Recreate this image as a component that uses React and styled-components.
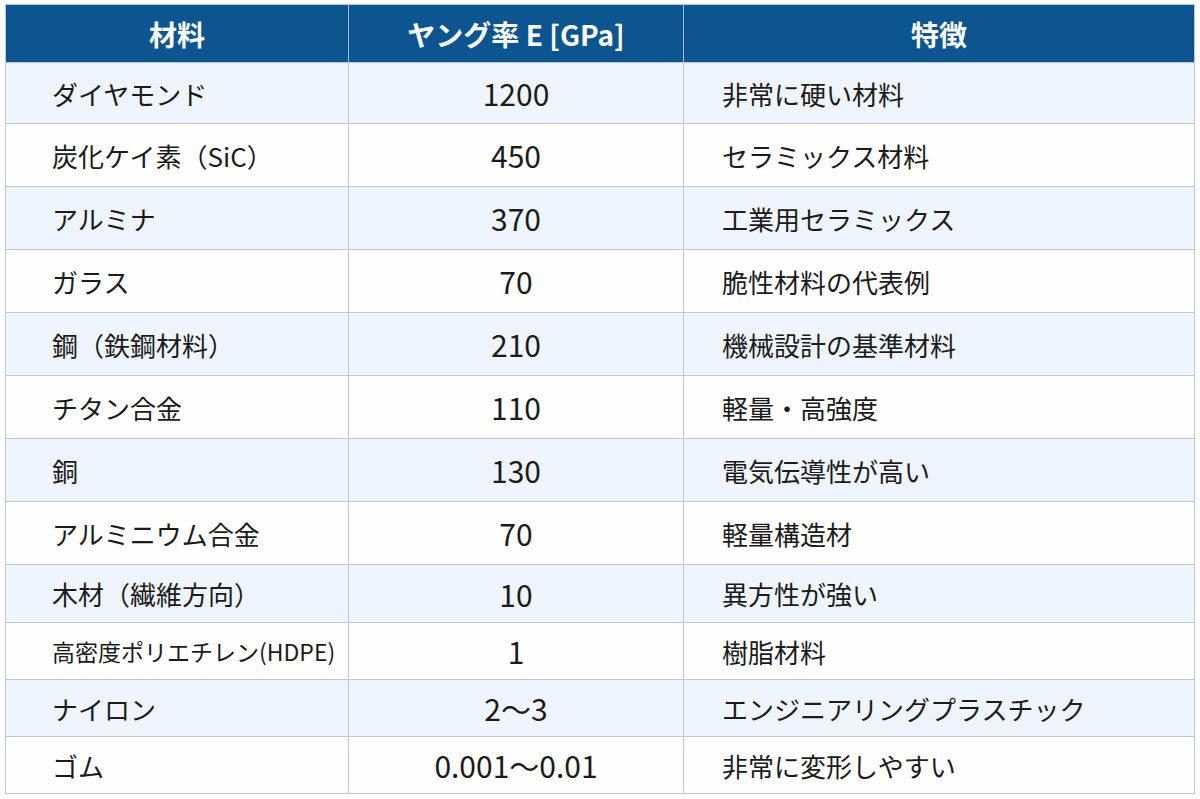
import React from 'react';
import styled, {createGlobalStyle} from 'styled-components';

const GlobalStyle = createGlobalStyle`
  html, body {
    margin: 0;
    padding: 0;
    background: #ffffff;
  }
  body {
    font-family: 'Noto Sans CJK JP', 'Noto Sans', sans-serif;
    color: #1b1b1b;
  }
`;

//table data
const rows = [
  {name: 'ダイヤモンド', value: '1200', note: '非常に硬い材料', h: 61},
  {name: '炭化ケイ素（SiC）', value: '450', note: 'セラミックス材料', h: 63},
  {name: 'アルミナ', value: '370', note: '工業用セラミックス', h: 63},
  {name: 'ガラス', value: '70', note: '脆性材料の代表例', h: 63},
  {name: '鋼（鉄鋼材料）', value: '210', note: '機械設計の基準材料', h: 63},
  {name: 'チタン合金', value: '110', note: '軽量・高強度', h: 63},
  {name: '銅', value: '130', note: '電気伝導性が高い', h: 63},
  {name: 'アルミニウム合金', value: '70', note: '軽量構造材', h: 63},
  {name: '木材（繊維方向）', value: '10', note: '異方性が強い', h: 58},
  {name: '高密度ポリエチレン(HDPE)', value: '1', note: '樹脂材料', h: 57, small: true},
  {name: 'ナイロン', value: '2〜3', note: 'エンジニアリングプラスチック', h: 57},
  {name: 'ゴム', value: '0.001〜0.01', note: '非常に変形しやすい', h: 57},
];

const App = () => {
  return (
    <>
      <GlobalStyle />
      <Page>
        <Table>
          <colgroup>
            <col style={{width: 343}} />
            <col style={{width: 335}} />
            <col />
          </colgroup>
          <thead>
            <HeadRow>
              <HeadCell>材料</HeadCell>
              <HeadCell>ヤング率 E [GPa]</HeadCell>
              <HeadCell>特徴</HeadCell>
            </HeadRow>
          </thead>
          <tbody>
            {rows.map((row, i) => (
              <Row key={row.name} h={row.h} shaded={i % 2 === 0}>
                <NameCell small={row.small}>{row.name}</NameCell>
                <ValueCell>{row.value}</ValueCell>
                <NoteCell>{row.note}</NoteCell>
              </Row>
            ))}
          </tbody>
        </Table>
      </Page>
    </>
  );
};

const Page = styled.div`
  padding: 4px 5px 6px 5px;
`;

const Table = styled.table`
  width: 1190px;
  table-layout: fixed;
  border-collapse: collapse;
  border: 1px solid #b9c9dd;
`;

const HeadRow = styled.tr`
  height: 58px;
  background: #0c5591;
`;

const HeadCell = styled.th`
  color: #ffffff;
  font-size: 28px;
  font-weight: 700;
  text-align: center;
  padding: 0;
  border-left: 1px solid #9fbcd9;
  &:first-child {
    border-left: none;
  }
`;

const Row = styled.tr`
  height: ${(props) => props.h}px;
  background: ${(props) => (props.shaded ? '#eff5fc' : '#fefefe')};
  td {
    border: 1px solid #b9c9dd;
    padding: 0;
    white-space: nowrap;
    vertical-align: middle;
  }
`;

const NameCell = styled.td`
  font-size: ${(props) => (props.small ? '23px' : '26px')};
  padding-left: 46px !important;
  text-align: left;
`;

const ValueCell = styled.td`
  font-size: 30px;
  text-align: center;
`;

const NoteCell = styled.td`
  font-size: 26px;
  padding-left: 38px !important;
  text-align: left;
`;

export default App;
